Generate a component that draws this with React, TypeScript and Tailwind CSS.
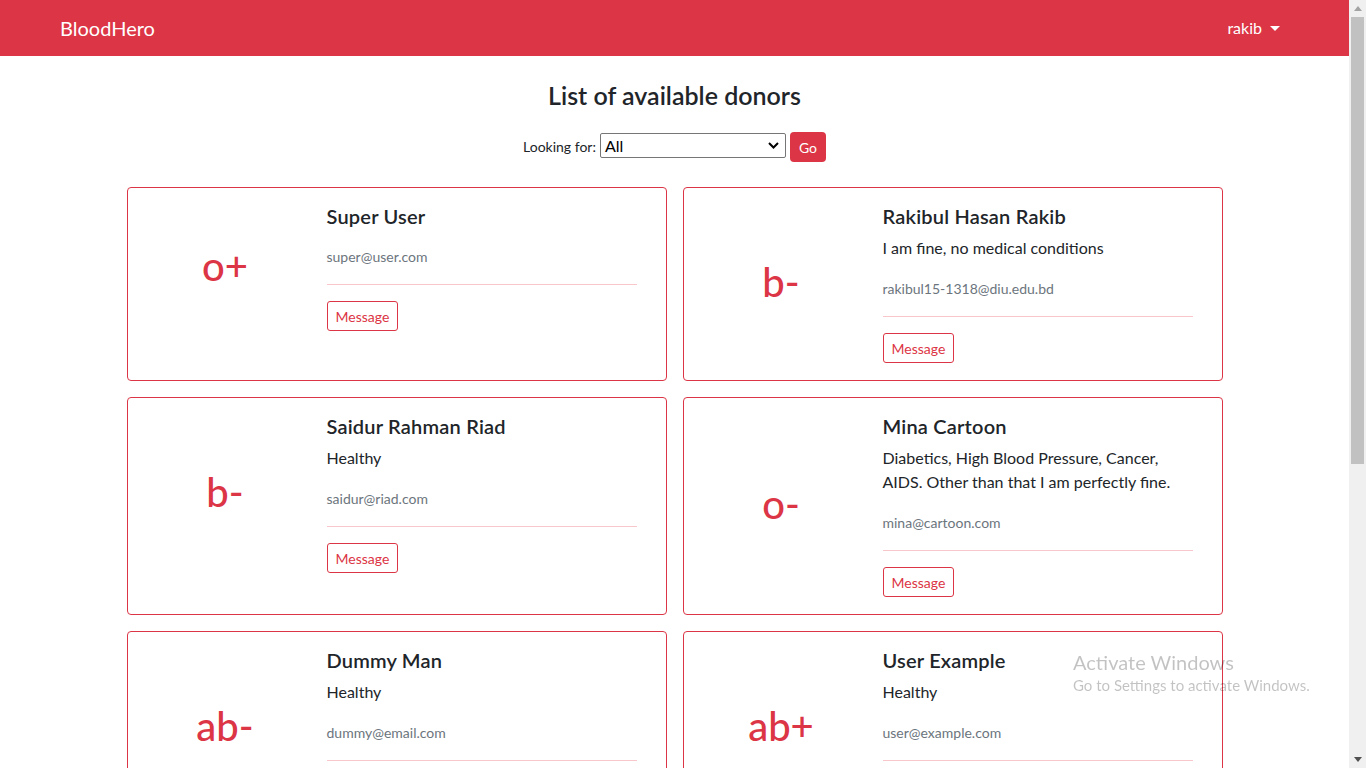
import { ReactNode } from "react";

type Donor = {
  group: string;
  name: string;
  about?: string;
  email: string;
};

const donors: Donor[] = [
  { group: "o+", name: "Super User", email: "super@user.com" },
  {
    group: "b-",
    name: "Rakibul Hasan Rakib",
    about: "I am fine, no medical conditions",
    email: "rakibul15-1318@diu.edu.bd",
  },
  { group: "b-", name: "Saidur Rahman Riad", about: "Healthy", email: "saidur@riad.com" },
  {
    group: "o-",
    name: "Mina Cartoon",
    about: "Diabetics, High Blood Pressure, Cancer, AIDS. Other than that I am perfectly fine.",
    email: "mina@cartoon.com",
  },
  { group: "ab-", name: "Dummy Man", about: "Healthy", email: "dummy@email.com" },
  { group: "ab+", name: "User Example", about: "Healthy", email: "user@example.com" },
  { group: "a+", name: "Test Donor", about: "Healthy", email: "test@donor.com" },
  { group: "a-", name: "Another Donor", about: "Healthy", email: "another@donor.com" },
];

function Navbar() {
  return (
    <nav className="h-14 shrink-0 bg-[#dc3545] flex items-center justify-between pl-[60px] pr-[61px] text-white">
      <span className="text-[20px] leading-[30px]">BloodHero</span>
      <button className="flex items-center gap-2 px-2 py-2 text-[16px]">
        rakib
        <svg width="10" height="5" viewBox="0 0 10 5">
          <path d="M0 0h10L5 5z" fill="#fff" />
        </svg>
      </button>
    </nav>
  );
}

function DonorCard({ donor }: { donor: Donor }) {
  return (
    <div className="border border-[#dc3545] rounded-[4px] bg-white">
      <div className="flex items-center">
        <div className="w-[195px] shrink-0 pb-1 text-center text-[40px] leading-[48px] font-medium text-[#dc3545]">
          {donor.group}
        </div>
        <div className="flex-1 ml-[4px] pr-[29px] pt-4 pb-[17px]">
          <h5 className="text-[20px] leading-6 font-semibold text-[#212529] tracking-[0.2px]">
            {donor.name}
          </h5>
          {donor.about && (
            <p className="mt-2 text-[16px] leading-6 text-[#212529]">{donor.about}</p>
          )}
          <p className="mt-[18px] text-[14px] leading-[22px] text-[#6c757d]">{donor.email}</p>
          <div className="mt-4 h-px bg-[#f7c7cc]" />
          <button className="mt-4 h-[30px] px-2 border border-[#dc3545] rounded-[3px] text-[14px] text-[#dc3545]">
            Message
          </button>
        </div>
      </div>
    </div>
  );
}

function Scrollbar() {
  return (
    <aside className="w-[17px] shrink-0 bg-[#f0f0f0] flex flex-col items-center">
      <div className="h-[17px] flex items-center justify-center">
        <svg width="8" height="5" viewBox="0 0 8 5">
          <path d="M0 5L4 0l4 5z" fill="#a3a3a3" />
        </svg>
      </div>
      <div className="w-[13px] h-[447px] bg-[#c1c1c1]" />
      <div className="flex-1" />
      <div className="h-[17px] flex items-center justify-center">
        <svg width="8" height="5" viewBox="0 0 8 5">
          <path d="M0 0h8L4 5z" fill="#505050" />
        </svg>
      </div>
    </aside>
  );
}

function Watermark({ children }: { children: ReactNode }) {
  return (
    <div className="fixed left-[1073px] top-[650px] pointer-events-none text-[rgba(0,0,0,0.24)]">
      {children}
    </div>
  );
}

export default function App() {
  return (
    <div className="h-screen flex overflow-hidden bg-white font-['Lato','Noto_Sans',sans-serif]">
      <div className="flex-1 min-w-0 flex flex-col">
        <Navbar />
        <main className="flex-1 overflow-hidden">
          <h4 className="mt-[25px] text-center text-[25px] leading-[29px] font-semibold text-[#212529]">
            List of available donors
          </h4>
          <form className="mt-[22px] flex items-start justify-center gap-1 text-[14px] text-[#212529]">
            <label className="mt-[5px] leading-5">Looking for:</label>
            <div className="mt-[1px] w-[186px] h-[25px] border border-[#767676] rounded-[2px] flex items-center justify-between pl-1 pr-[6px] text-[16px] text-black">
              <span>All</span>
              <svg width="11" height="7" viewBox="0 0 11 7">
                <path d="M1 1l4.5 4.5L10 1" stroke="#000" strokeWidth="2" fill="none" />
              </svg>
            </div>
            <button type="button" className="h-[30px] w-9 rounded-[4px] bg-[#dc3545] text-white text-[14px]">
              Go
            </button>
          </form>
          <div className="mt-[25px] w-[1096px] mx-auto grid grid-cols-2 gap-x-4 gap-y-4">
            {donors.map((d) => (
              <DonorCard key={d.email} donor={d} />
            ))}
          </div>
        </main>
      </div>
      <Scrollbar />
      <Watermark>
        <div className="text-[20px] leading-6">Activate Windows</div>
        <div className="text-[15px] leading-5 mt-[1px]">Go to Settings to activate Windows.</div>
      </Watermark>
    </div>
  );
}
